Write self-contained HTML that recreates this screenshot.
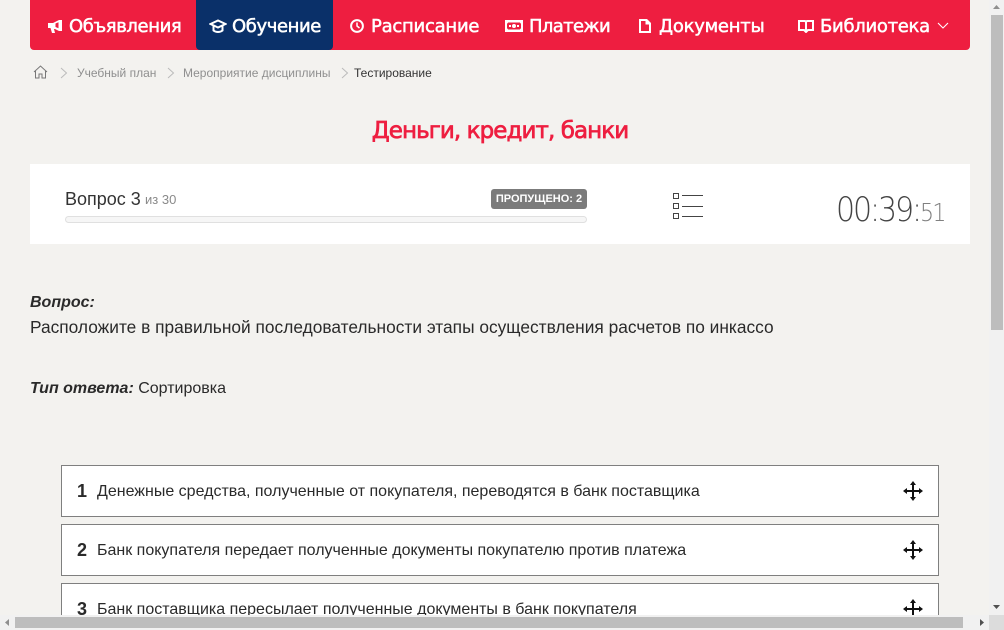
<!DOCTYPE html>
<html lang="ru"><head><meta charset="utf-8"><title>Тестирование</title>
<style>
html,body{margin:0;padding:0;width:1004px;height:630px;overflow:hidden;background:#f3f2ef;font-family:"Liberation Sans",sans-serif;color:#333}
.a{position:absolute;white-space:nowrap}
#view{position:absolute;left:0;top:0;width:989px;height:615px;overflow:hidden}
#nav{left:30px;top:0;width:940px;height:50px;background:#ee1e40;border-radius:0 0 4px 4px}
#act{left:196px;top:0;width:137px;height:50px;background:#0a3069;border-radius:0 0 4px 4px}
.n{top:15px;font:18px/24px "DejaVu Sans",sans-serif;color:#fff;font-weight:400;-webkit-text-stroke:.5px #fff}
.c{top:66px;font-size:12px;line-height:14px;color:#8f8f8f}
.item{left:61px;width:876px;height:50px;background:#fff;border:1px solid #7f7f7f}
.num{left:77px;font-size:18px;line-height:20px;font-weight:bold;color:#2a2a2a}
.t{left:97px;font-size:16px;line-height:20px;color:#2a2a2a}
</style></head><body>
<div id="view">
<div class="a" id="nav"></div>
<div class="a" id="act"></div>

<svg class="a" style="left:47px;top:18px" width="16" height="16" viewBox="0 0 16 16"><path fill="#fff" d="M1 5h5l6-3h3v11h-3l-4-2h-1l1 4H5L3.500 10H1z"/><path fill="#ee1e40" d="M8.500 5.500v3.500l3 1.200V4.200z"/></svg>
<span class="a n" style="left:69px;letter-spacing:-.4px">Объявления</span>
<svg class="a" style="left:209px;top:18px" width="18" height="16" viewBox="0 0 18 16"><path fill="none" stroke="#fff" stroke-width="2" d="M1.500 6L9 2.500 16.500 6 9 9.500zM4.500 8v4.500c2.500 2 6.500 2 9 0V8"/></svg>
<span class="a n" style="left:232px;letter-spacing:-.4px">Обучение</span>
<svg class="a" style="left:349px;top:18px" width="16" height="16" viewBox="0 0 16 16"><circle cx="8" cy="8" r="5.900" fill="none" stroke="#fff" stroke-width="2"/><path fill="none" stroke="#fff" stroke-width="1.500" d="M8 4.500V8l2.500 2"/></svg>
<span class="a n" style="left:371px;letter-spacing:-.25px">Расписание</span>
<svg class="a" style="left:505px;top:20px" width="18" height="12" viewBox="0 0 18 12"><path fill="#fff" fill-rule="evenodd" d="M0 0h18v12H0zM3 2.500q0 1-1 1v5q1 0 1 1h12q0-1 1-1v-5q-1 0-1-1z"/><circle cx="9" cy="6" r="2" fill="#fff"/><rect x="4" y="5" width="2" height="2" fill="#fff"/><rect x="12" y="5" width="2" height="2" fill="#fff"/></svg>
<span class="a n" style="left:529px;letter-spacing:-.65px">Платежи</span>
<svg class="a" style="left:639px;top:19px" width="12" height="14" viewBox="0 0 12 14"><path fill="#fff" fill-rule="evenodd" d="M0 0h8l4 4v10H0zM2 2v10h8V5.500H6.500V2z"/></svg>
<span class="a n" style="left:659px;letter-spacing:-.25px">Документы</span>
<svg class="a" style="left:798px;top:19px" width="16" height="14" viewBox="0 0 16 14"><path fill="none" stroke="#fff" stroke-width="2" d="M7 2H1v9h5l2 2 2-2h5V2H9L8 3zM8 2v10"/></svg>
<span class="a n" style="left:820px;letter-spacing:-.3px">Библиотека</span>
<svg class="a" style="left:937px;top:22px" width="12" height="8" viewBox="0 0 12 8"><path fill="none" stroke="#fff" stroke-width="1.100" d="M1 1l5 5 5-5"/></svg>

<svg class="a" style="left:33px;top:65px" width="15" height="14" viewBox="0 0 15 14"><path fill="none" stroke="#777" d="M1 7l6.500-6L14 7M2.500 6v7h3.500V9h3v4h3.500V6"/></svg>
<svg class="a" style="left:60px;top:67px" width="8" height="12" viewBox="0 0 8 12"><path fill="none" stroke="#bbb" d="M1 1l5.500 5L1 11"/></svg>
<span class="a c" style="left:77px">Учебный план</span>
<svg class="a" style="left:167px;top:67px" width="8" height="12" viewBox="0 0 8 12"><path fill="none" stroke="#bbb" d="M1 1l5.500 5L1 11"/></svg>
<span class="a c" style="left:183px">Мероприятие дисциплины</span>
<svg class="a" style="left:341px;top:67px" width="8" height="12" viewBox="0 0 8 12"><path fill="none" stroke="#bbb" d="M1 1l5.500 5L1 11"/></svg>
<span class="a c" style="left:354px;color:#333">Тестирование</span>

<div class="a" style="left:30px;width:940px;top:117px;text-align:center;font:400 23px/28px 'DejaVu Sans',sans-serif;color:#ee1e40;letter-spacing:-.93px;-webkit-text-stroke:.7px #ee1e40">Деньги, кредит, банки</div>

<div class="a" style="left:30px;top:164px;width:940px;height:80px;background:#fff"></div>
<span class="a" style="left:65px;top:187px;font-size:18px;line-height:24px;color:#333">Вопрос 3</span>
<span class="a" style="left:145px;top:192px;font-size:13px;line-height:16px;color:#8a8a8a">из 30</span>
<div class="a" style="left:491px;top:189px;width:96px;height:20px;background:#7b7b7b;border-radius:3px;color:#fff;font-size:11px;font-weight:bold;line-height:21px;text-align:center">ПРОПУЩЕНО: 2</div>
<div class="a" style="left:65px;top:216px;width:520px;height:5px;background:#f6f6f6;border:1px solid #e0e0e0;border-radius:4px"></div>
<svg class="a" style="left:672px;top:192px" width="32" height="29" viewBox="0 0 32 29"><g fill="none" stroke="#444"><rect x="1.500" y="1.500" width="5" height="5"/><rect x="1.500" y="11.500" width="5" height="5"/><rect x="1.500" y="21.500" width="5" height="5"/><path d="M10 3.500h21M10 14.500h21M10 24.500h21"/></g></svg>
<span class="a" style="left:836px;top:190px;font:34px/40px 'DejaVu Sans',sans-serif;color:#444;letter-spacing:-2.400px;font-weight:200;transform:scaleX(.884);transform-origin:0 50%">00:39:<span style="font-size:25px;color:#808080;letter-spacing:-2px">51</span></span>

<span class="a" style="left:30px;top:293px;font-size:16px;line-height:20px;font-weight:bold;font-style:italic;color:#2a2a2a">Вопрос:</span>
<span class="a" style="left:30px;top:317px;font-size:17.33px;line-height:20px;color:#2a2a2a">Расположите в правильной последовательности этапы осуществления расчетов по инкассо</span>
<span class="a" style="left:30px;top:379px;font-size:16px;line-height:20px;color:#2a2a2a"><b><i>Тип ответа:</i></b> Сортировка</span>

<div class="a item" style="top:465px"></div>
<span class="a num" style="top:481px">1</span><span class="a t" style="top:482px">Денежные средства, полученные от покупателя, переводятся в банк поставщика</span>
<div class="a item" style="top:524px"></div>
<span class="a num" style="top:540px">2</span><span class="a t" style="top:541px">Банк покупателя передает полученные документы покупателю против платежа</span>
<div class="a item" style="top:583px"></div>
<span class="a num" style="top:599px">3</span><span class="a t" style="top:600px">Банк поставщика пересылает полученные документы в банк покупателя</span>

<svg class="a" style="left:903px;top:481px" width="20" height="20" viewBox="0 0 20 20"><path fill="#111" d="M9 4h2v5h5V7l4 3-4 3v-2h-5v5h2l-3 4-3-4h2v-5H4v2l-4-3 4-3v2h5V4H7l3-4 3 4z"/></svg>
<svg class="a" style="left:903px;top:540px" width="20" height="20" viewBox="0 0 20 20"><path fill="#111" d="M9 4h2v5h5V7l4 3-4 3v-2h-5v5h2l-3 4-3-4h2v-5H4v2l-4-3 4-3v2h5V4H7l3-4 3 4z"/></svg>
<svg class="a" style="left:903px;top:599px" width="20" height="20" viewBox="0 0 20 20"><path fill="#111" d="M9 4h2v5h5V7l4 3-4 3v-2h-5v5h2l-3 4-3-4h2v-5H4v2l-4-3 4-3v2h5V4H7l3-4 3 4z"/></svg>
</div>

<div class="a" style="left:989px;top:0;width:15px;height:615px;background:#f1f1f1"></div>
<div class="a" style="left:991px;top:15px;width:12px;height:315px;background:#bdbdbd"></div>
<svg class="a" style="left:992px;top:4px" width="9" height="6"><path d="M4.500 1L8 5H1z" fill="#8f8f8f"/></svg>
<svg class="a" style="left:992px;top:604px" width="9" height="6"><path d="M1 1h7L4.500 5z" fill="#505050"/></svg>
<div class="a" style="left:0;top:615px;width:989px;height:15px;background:#f1f1f1"></div>
<div class="a" style="left:989px;top:615px;width:15px;height:15px;background:#dcdcdc"></div>
<div class="a" style="left:15px;top:617px;width:948px;height:11px;background:#bdbdbd"></div>
<svg class="a" style="left:4px;top:618px" width="6" height="9"><path d="M5 1v7L1 4.500z" fill="#8f8f8f"/></svg>
<svg class="a" style="left:979px;top:618px" width="6" height="9"><path d="M1 1v7l4-3.500z" fill="#505050"/></svg>
</body></html>
